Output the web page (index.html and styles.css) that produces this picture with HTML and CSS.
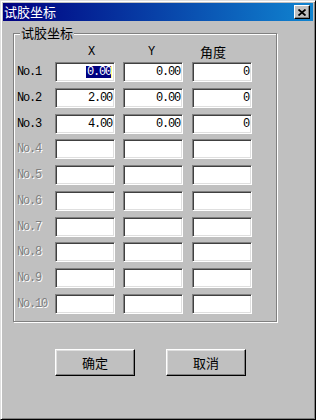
FILE: index.html
```html
<!DOCTYPE html>
<html>
<head>
<meta charset="utf-8">
<link rel="stylesheet" href="styles.css">
</head>
<body>
<div class="window">
  <div class="titlebar">
    <span class="title">试胶坐标</span>
    <span class="close"><svg width="8" height="7" viewBox="0 0 8 7"><path d="M0.5 0.5 L7.5 6.5 M7.5 0.5 L0.5 6.5" stroke="#000" stroke-width="1.8" fill="none"/></svg></span>
  </div>
  <div class="group">
    <span class="legend">试胶坐标</span>
    <div class="head">
      <span></span><span class="hx mono">X</span><span class="hy mono">Y</span><span class="ha">角度</span>
    </div>
    <div class="rows">
      <span class="lbl mono">No.1</span><div class="field mono"><span class="sel">0.00</span><span class="caret"></span></div><div class="field mono">0.00</div><div class="field mono">0</div>
      <span class="lbl mono">No.2</span><div class="field mono">2.00</div><div class="field mono">0.00</div><div class="field mono">0</div>
      <span class="lbl mono">No.3</span><div class="field mono">4.00</div><div class="field mono">0.00</div><div class="field mono">0</div>
      <span class="lbl mono dis">No.4</span><div class="field"></div><div class="field"></div><div class="field"></div>
      <span class="lbl mono dis">No.5</span><div class="field"></div><div class="field"></div><div class="field"></div>
      <span class="lbl mono dis">No.6</span><div class="field"></div><div class="field"></div><div class="field"></div>
      <span class="lbl mono dis">No.7</span><div class="field"></div><div class="field"></div><div class="field"></div>
      <span class="lbl mono dis">No.8</span><div class="field"></div><div class="field"></div><div class="field"></div>
      <span class="lbl mono dis">No.9</span><div class="field"></div><div class="field"></div><div class="field"></div>
      <span class="lbl mono dis">No.10</span><div class="field"></div><div class="field"></div><div class="field"></div>
    </div>
  </div>
  <div class="buttons">
    <div class="btn">确定</div>
    <div class="btn">取消</div>
  </div>
</div>
</body>
</html>
```
FILE: styles.css
```css
html, body {
  margin: 0;
  padding: 0;
  background: #c0c0c0;
}
.window {
  box-sizing: border-box;
  width: 316px;
  height: 420px;
  background: #c0c0c0;
  border: 1px solid;
  border-color: #dfdfdf #000 #000 #dfdfdf;
  box-shadow: inset 1px 1px 0 #fff, inset -1px -1px 0 #808080;
  padding: 2px;
  font-family: "Noto Sans CJK SC", sans-serif;
  font-size: 13px;
  color: #000;
}
.titlebar {
  height: 18px;
  background: linear-gradient(to right, #000080, #1084d0);
  display: flex;
  align-items: center;
  justify-content: space-between;
  padding: 0 3px 0 1px;
}
.title {
  color: #fff;
  font-size: 13px;
  line-height: 18px;
}
.close {
  box-sizing: border-box;
  width: 16px;
  height: 14px;
  background: #c0c0c0;
  border: 1px solid;
  border-color: #fff #000 #000 #fff;
  box-shadow: inset -1px -1px 0 #808080;
  display: flex;
  align-items: center;
  justify-content: center;
}
.close svg { display: block; }
.group {
  position: relative;
  box-sizing: border-box;
  width: 264px;
  margin: 12px 0 0 10px;
  border: 1px solid #808080;
  box-shadow: inset 1px 1px 0 #fff, 1px 1px 0 #fff;
  padding: 11px 0 7px 3px;
}
.legend {
  position: absolute;
  top: -8px;
  left: 6px;
  line-height: 14px;
  padding: 0 1px;
  background: #c0c0c0;
}
.mono {
  font-family: "Liberation Mono", monospace;
  font-size: 12px;
  letter-spacing: -1.2px;
}
.head {
  display: grid;
  grid-template-columns: 38px 68px 69px 60px;
  height: 14px;
  line-height: 14px;
  margin-bottom: 3px;
}
.hx { padding-left: 33px; }
.hy { padding-left: 25px; }
.ha { padding-left: 8px; }
.rows {
  display: grid;
  grid-template-columns: 38px 68px 69px 60px;
  grid-auto-rows: 20px;
  row-gap: 5.78px;
}
.lbl {
  line-height: 20px;
  white-space: nowrap;
}
.lbl.dis {
  color: #808080;
  text-shadow: 1px 1px 0 #fff;
}
.field {
  box-sizing: border-box;
  width: 60px;
  height: 20px;
  background: #fff;
  border: 1px solid;
  border-color: #808080 #fff #fff #808080;
  box-shadow: inset 1px 1px 0 #404040, inset -1px -1px 0 #dfdfdf;
  padding: 0 2px 0 2px;
  display: flex;
  align-items: center;
  justify-content: flex-end;
  line-height: 12px;
}
.sel {
  background: #000080;
  color: #fff;
  padding-left: 1px;
}
.caret {
  width: 1px;
  height: 12px;
  background: #ffff80;
}
.buttons {
  display: flex;
  gap: 31px;
  margin: 27px 0 0 52px;
}
.btn {
  box-sizing: border-box;
  width: 80px;
  height: 27px;
  border: 1px solid;
  border-color: #fff #000 #000 #fff;
  box-shadow: inset -1px -1px 0 #808080, inset 1px 1px 0 #dfdfdf;
  display: flex;
  align-items: center;
  justify-content: center;
  font-size: 13px;
}
```
